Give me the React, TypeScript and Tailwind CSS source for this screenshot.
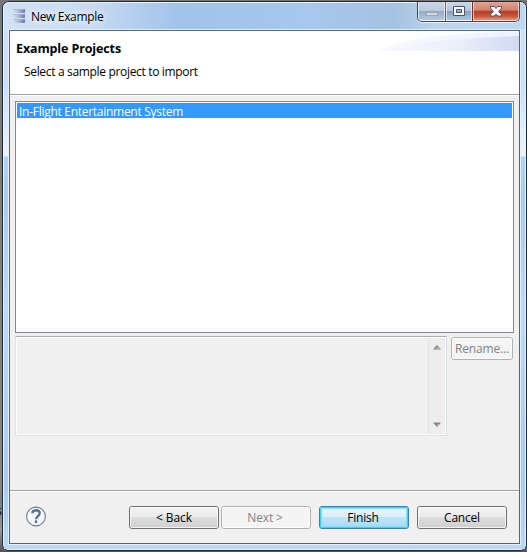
import type { ReactNode } from "react";

const font = "font-['Segoe_UI','Open_Sans','Noto_Sans',sans-serif]";

function PushButton({ label, className, inner, text }: { label: string; className: string; inner: string; text: string }) {
  return (
    <button className={`block shrink-0 rounded-[3px] border p-0 ${className}`}>
      <span className={`flex h-full w-full items-center justify-center rounded-[2px] border ${inner}`}>
        <span className={`block whitespace-nowrap leading-4 ${text}`}>{label}</span>
      </span>
    </button>
  );
}

function Caption({ className, children }: { className: string; children: ReactNode }) {
  return <div className={`flex h-[19px] shrink-0 items-center justify-center border border-t-0 border-white/60 ${className}`}>{children}</div>;
}

function TitleBar() {
  return (
    <div className="relative flex h-[26px] shrink-0 justify-between">
      <div className="flex pl-[8px] pt-[6px]">
        <svg width="14" height="15" viewBox="0 0 14 15">
          <defs>
            <linearGradient id="bars" gradientUnits="userSpaceOnUse" x1="0" x2="13" y1="0" y2="0">
              <stop offset="0" stopColor="#dbe5f3" />
              <stop offset=".45" stopColor="#b5c0da" />
              <stop offset="1" stopColor="#6b78a2" />
            </linearGradient>
          </defs>
          {[0, 5, 10].map((y) => (
            <g key={y}>
              <rect y={y} width="13" height="4" rx="1" fill="url(#bars)" />
              <rect x="1" y={y} width="11" height="1" fill="#aab5d1" opacity=".7" />
            </g>
          ))}
        </svg>
        <span className="ml-[5px] block h-4 whitespace-nowrap text-[12px] leading-4 tracking-[-0.34px] text-black [text-shadow:0_0_6px_#fff,0_0_8px_#fff]">New Example</span>
      </div>
      <div className="-mt-px mr-[5px] flex h-5 w-[103px] overflow-hidden rounded-b-[5px] border border-t-0 border-[#414c5b] shadow-[0_1px_#e3f0fc]">
        <Caption className="w-[27px] rounded-bl-[4px] bg-[linear-gradient(#ccd8e7_0%,#bac9dc_48%,#94a9c2_50%,#b4c9e0_100%)]">
          <span className="mt-[5px] block h-1 w-3 border border-[#9aa7b7] bg-[#d2dae3]" />
        </Caption>
        <Caption className="ml-px w-[26px] bg-[linear-gradient(#ccd8e7_0%,#b5c5d9_48%,#899fba_50%,#abc5df_100%)] shadow-[-1px_0_#596a7e]">
          <svg width="12" height="10" viewBox="0 0 12 10"><path fillRule="evenodd" d="M.5.5h11v9H.5z M3.5 3.5v3h5v-3z" fill="#f5f7fa" stroke="#48546a" /></svg>
        </Caption>
        <Caption className="ml-px w-[46px] rounded-br-[4px] bg-[linear-gradient(#e2a594_0%,#d0806d_46%,#b83c28_50%,#c85339_78%,#e49678_100%)] shadow-[-1px_0_#743027]">
          <svg width="12" height="11" viewBox="0 0 12 11"><path d="M.5.5h3.8L6 2.4 7.7.5h3.8v1.6L8.6 5.3l2.9 3.1V10H7.7L6 8.2 4.3 10H.5V8.4l2.9-3.1L.5 2.1z" fill="#fff" stroke="#565063" /></svg>
        </Caption>
      </div>
    </div>
  );
}

function Header() {
  return (
    <header className="relative h-[65px] shrink-0 border-b border-white bg-white shadow-[inset_0_-1px_#a0a0a0]">
      <svg className="absolute right-0 top-0" width="145" height="22" viewBox="0 0 145 22">
        <defs>
          <linearGradient id="wave" x1="0" x2="1"><stop stopColor="#f9fafd" /><stop offset=".55" stopColor="#eceffa" /><stop offset="1" stopColor="#d2daf3" /></linearGradient>
          <linearGradient id="wave-edge" x1="0" x2="1"><stop stopColor="#f7f9fe" /><stop offset="1" stopColor="#eff2fc" /></linearGradient>
        </defs>
        <path d="M4 20Q48 0 145 1V20Z" fill="url(#wave-edge)" />
        <path d="M4 20Q50 8 145 5V20Z" fill="url(#wave)" />
      </svg>
      <h1 className="relative h-[18px] w-fit whitespace-nowrap pl-[6px] pt-[9px] text-[12.5px] font-bold leading-[18px] tracking-[-0.12px]">Example Projects</h1>
      <p className="relative mt-[15px] w-fit whitespace-nowrap pl-[14px] text-[12px] leading-4 tracking-[-0.33px]">Select a sample project to import</p>
    </header>
  );
}

function ScrollBar() {
  return (
    <div className="flex h-full w-[17px] flex-col items-center justify-between border-l border-[#e2e2e2] bg-[#ededed] py-[7px] pr-px">
      <svg width="8" height="5" viewBox="0 0 8 5"><path d="M0 4.5 4 0l4 4.5z" fill="#858585" /><path d="M1 4.5h7L5 2z" fill="#b5b5b5" /></svg>
      <svg width="8" height="5" viewBox="0 0 8 5"><path d="M0 .5h8L4 5z" fill="#858585" /><path d="M4 2h3L4 5z" fill="#adadad" /></svg>
    </div>
  );
}

export default function App() {
  return (
    <main className={`relative h-[552px] w-[527px] overflow-hidden bg-[linear-gradient(#777_0px,#858585_490px,#777c85_500px,#999_530px,#555_552px)] pl-[2px] pt-px text-[12px] text-black ${font}`}>
      <span className="absolute -left-1 top-[503px] leading-4">s</span>
      <div className="relative h-[550px] w-[525px] rounded-[7px] border border-[#202a34] bg-[#b3d2f2]">
        <div className="flex h-[548px] w-[523px] flex-col rounded-[6px] border border-[#e6f3ff] bg-[linear-gradient(90deg,#d1e2f6_0px,#c6daf2_90px,#a1c3e9_175px,#a7c8ed_300px,#a5c2e1_390px,#bad3ee_430px,#bed7f2_100%)] bg-[length:100%_26px] bg-no-repeat">
          <TitleBar />
          <div className="flex min-h-0 flex-1 bg-[linear-gradient(#cfe0f4_0px,#c9e1fa_60px,#edf5fd_127px,#b0d2f5_128px,#a9cbed_170px,#b9dafd_280px,#a9cbed_450px,#bad7f6_520px)] px-1 pb-1">
            <div className="h-[516px] w-[513px] shrink-0 border border-[#e3f0fc]">
              <section className="flex h-[514px] w-[511px] flex-col border border-[#56667a] bg-[#f0f0f0]">
                <Header />
                <div className="h-[394px] shrink-0 px-[5px] pt-[5px]">
                  <div className="h-[232px] w-[499px] border border-[#828790] bg-white p-px">
                    <div className="h-[15px] w-[495px] bg-[#3399ff] pl-[2px] text-white"><span className="block w-fit whitespace-nowrap leading-[17px] tracking-[-0.28px]">In-Flight Entertainment System</span></div>
                  </div>
                  <div className="mt-[3px] flex">
                    <div className="h-[100px] w-[432px] border border-b-[#e3e3e3] border-l-[#e2e3ea] border-r-[#dbdfe6] border-t-[#abadb3]">
                      <div className="flex h-[98px] justify-end border border-white"><ScrollBar /></div>
                    </div>
                    <div className="pl-1 pt-px">
                      <PushButton label="Rename..." className="h-[23px] w-[62px] border-[#adb2b5] bg-[#f4f4f4]" inner="border-[#fcfcfc]" text="text-[#838383] tracking-[-0.15px]" />
                    </div>
                  </div>
                </div>
                <footer className="flex flex-1 items-start border-t border-[#a0a0a0] pt-[15px] shadow-[inset_0_1px_#fff]">
                  <svg className="ml-[15px] shrink-0" width="22" height="22" viewBox="0 0 22 22">
                    <circle cx="11" cy="10.5" r="9.4" fill="#f7f8fb" stroke="#687b9b" strokeWidth="1.1" />
                    <path d="M7.3 7.2C7.4 3.4 14.7 3.2 14.7 7.2c0 2.9-3.6 2.9-3.6 6" fill="none" stroke="#566b91" strokeWidth="2.3" />
                    <circle cx="11" cy="15.7" r="1.4" fill="#566b91" />
                  </svg>
                  <div className="ml-[82px] flex">
                    <PushButton label="< Back" className="h-[23px] w-[90px] border-[#707070] bg-[linear-gradient(#f2f2f2_0%,#ebebeb_48%,#dddddd_50%,#cfcfcf_100%)]" inner="border-[#fbfbfb]/80" text="tracking-[-0.1px]" />
                    <PushButton label="Next >" className="ml-[2px] h-[23px] w-[90px] border-[#adb2b5] bg-[#f4f4f4]" inner="border-[#fcfcfc]" text="text-[#838383] -ml-0.5 tracking-[-0.15px]" />
                    <PushButton label="Finish" className="ml-2 h-[23px] w-[90px] border-[#3c7fb1] bg-[linear-gradient(#ecf6fb_0%,#d9eff9_48%,#bee6f8_50%,#a9d9f1_100%)]" inner="border-[#36d4fb] shadow-[inset_0_0_1px_1px_#83e2fc]" text="-ml-0.5 tracking-[-0.2px]" />
                    <PushButton label="Cancel" className="ml-2 h-[23px] w-[90px] border-[#707070] bg-[linear-gradient(#f2f2f2_0%,#ebebeb_48%,#dddddd_50%,#cfcfcf_100%)]" inner="border-[#fbfbfb]/80" text="tracking-[-0.2px]" />
                  </div>
                </footer>
              </section>
            </div>
          </div>
        </div>
      </div>
    </main>
  );
}
